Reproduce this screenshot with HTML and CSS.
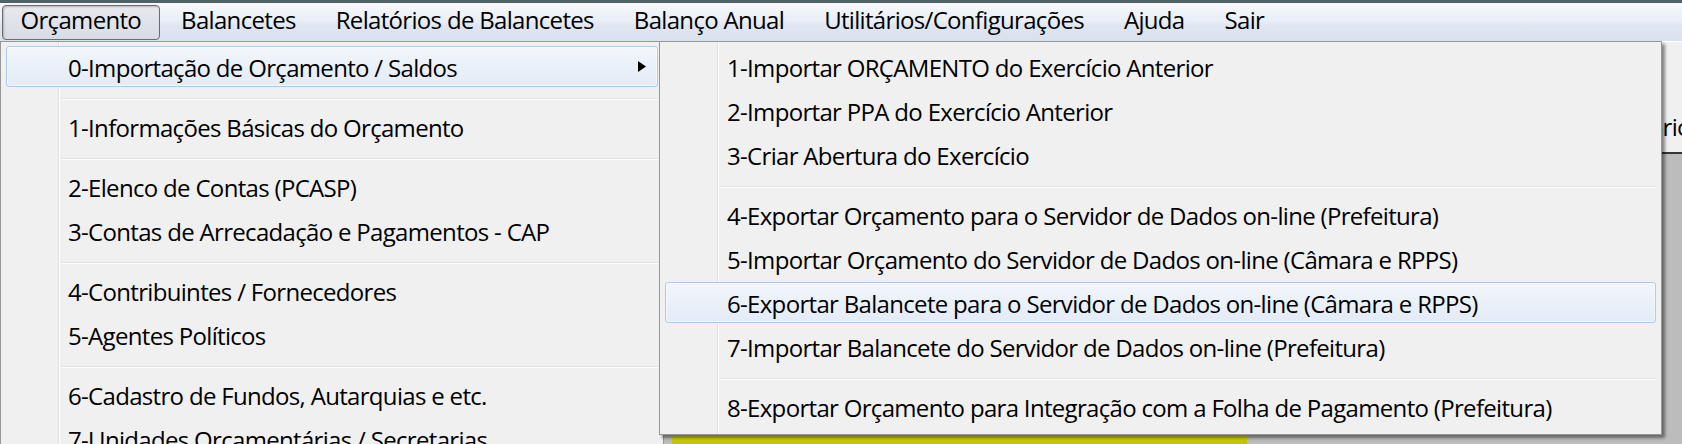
FILE: index.html
```html
<!DOCTYPE html>
<html lang="pt-BR">
<head>
<meta charset="utf-8">
<title>Orçamento</title>
<link rel="stylesheet" href="styles.css">
</head>
<body>
<div class="app">
  <div class="topstrip"></div>
  <nav class="menubar">
    <div class="menubar-item is-open">Orçamento</div>
    <div class="menubar-item">Balancetes</div>
    <div class="menubar-item">Relatórios de Balancetes</div>
    <div class="menubar-item">Balanço Anual</div>
    <div class="menubar-item">Utilitários/Configurações</div>
    <div class="menubar-item">Ajuda</div>
    <div class="menubar-item">Sair</div>
  </nav>
  <div class="workspace">
    <div class="toolbar"><span class="tool-label">Relatório</span></div>
    <div class="toolbar-rule"></div>
    <div class="canvas"><div class="progress"></div></div>
  </div>

  <div class="dropdown dropdown-main">
    <div class="item is-hot">0-Importação de Orçamento / Saldos<svg class="arrow" width="8" height="11" viewBox="0 0 8 11"><polygon points="0,0 8,5.5 0,11" fill="#000"/></svg></div>
    <div class="sep"><div class="sep-line"></div></div>
    <div class="item">1-Informações Básicas do Orçamento</div>
    <div class="sep"><div class="sep-line"></div></div>
    <div class="item">2-Elenco de Contas (PCASP)</div>
    <div class="item">3-Contas de Arrecadação e Pagamentos - CAP</div>
    <div class="sep"><div class="sep-line"></div></div>
    <div class="item">4-Contribuintes / Fornecedores</div>
    <div class="item">5-Agentes Políticos</div>
    <div class="sep"><div class="sep-line"></div></div>
    <div class="item">6-Cadastro de Fundos, Autarquias e etc.</div>
    <div class="item">7-Unidades Orçamentárias / Secretarias</div>
  </div>

  <div class="dropdown dropdown-sub">
    <div class="item">1-Importar ORÇAMENTO do Exercício Anterior</div>
    <div class="item">2-Importar PPA do Exercício Anterior</div>
    <div class="item">3-Criar Abertura do Exercício</div>
    <div class="sep"><div class="sep-line"></div></div>
    <div class="item">4-Exportar Orçamento para o Servidor de Dados on-line (Prefeitura)</div>
    <div class="item">5-Importar Orçamento do Servidor de Dados on-line (Câmara e RPPS)</div>
    <div class="item is-hot">6-Exportar Balancete para o Servidor de Dados on-line (Câmara e RPPS)</div>
    <div class="item">7-Importar Balancete do Servidor de Dados on-line (Prefeitura)</div>
    <div class="sep"><div class="sep-line"></div></div>
    <div class="item">8-Exportar Orçamento para Integração com a Folha de Pagamento (Prefeitura)</div>
  </div>
</div>
</body>
</html>
```
FILE: styles.css
```css
html, body {
  margin: 0;
  padding: 0;
  overflow: hidden;
}

body {
  font-family: "Open Sans", "Noto Sans", "DejaVu Sans", sans-serif;
  font-size: 24px;
  letter-spacing: -0.68px;
  color: #000;
  background: #bcbcbc;
}

.app {
  position: relative;
  width: 1682px;
  height: 444px;
  overflow: hidden;
  background: #bcbcbc;
}

.topstrip {
  height: 3px;
  background: #4f6366;
}

.menubar {
  height: 38px;
  display: flex;
  align-items: center;
  gap: 3px;
  padding-left: 2px;
  background: linear-gradient(to bottom, #f6f8fc 0%, #eaeff7 45%, #dfe6f1 60%, #d9e1ee 100%);
}

.menubar-item {
  box-sizing: border-box;
  height: 35px;
  padding: 0 17.5px 5px;
  border: 1px solid transparent;
  border-radius: 4px;
  display: flex;
  align-items: center;
  white-space: nowrap;
}

.menubar-item.is-open {
  border-color: #6c6c6c;
  background: linear-gradient(to bottom, #e7e9ee, #d8dce4);
  box-shadow: inset 1px 1px 2px rgba(0, 0, 0, 0.22);
}

.workspace {
  display: flex;
  flex-direction: column;
}

.toolbar {
  box-sizing: border-box;
  height: 111px;
  background: #f0f0f0;
  border-top: 1px solid #ffffff;
  padding: 68px 0 0 1596px;
  white-space: nowrap;
}

.toolbar-rule {
  height: 2px;
  background: #343434;
}

.canvas {
  height: 300px;
  background: #bcbcbc;
  padding: 280px 0 0 672px;
  box-sizing: border-box;
}

.progress {
  width: 575px;
  height: 12px;
  background: linear-gradient(to bottom, #d6d61a, #bcbc00);
}

.dropdown {
  position: absolute;
  top: 41px;
  box-sizing: border-box;
  border: 1px solid #979797;
  background-color: #f0f0f0;
  background-image: linear-gradient(to right,
    transparent 57px, #e0e1e1 57px, #e0e1e1 58px, #ffffff 58px, #ffffff 59px, transparent 59px);
  padding: 2px 2px 6px;
  display: flex;
  flex-direction: column;
}

.dropdown-main {
  left: 0;
  width: 664px;
  z-index: 1;
}

.dropdown-sub {
  left: 659px;
  width: 1003px;
  z-index: 2;
  box-shadow: 3px 3px 3px rgba(0, 0, 0, 0.45);
}

.item {
  box-sizing: border-box;
  height: 41px;
  margin: 2px 3px 1px;
  padding: 2px 0 0 61px;
  border: 1px solid transparent;
  border-radius: 3px;
  display: flex;
  align-items: center;
  white-space: nowrap;
}

.item.is-hot {
  border-color: #a9cbf1;
  background: linear-gradient(to bottom, #f2f6fb, #e3ebf6);
  box-shadow: inset 0 0 0 1px rgba(255, 255, 255, 0.55);
}

.arrow {
  margin-left: auto;
  margin-right: 11px;
  margin-top: -3px;
  flex: none;
}

.sep {
  height: 16px;
  box-sizing: border-box;
  padding: 10px 3px 0 58px;
}

.sep-line {
  height: 1px;
  background: #e0e0e0;
  border-bottom: 1px solid #ffffff;
}
```
